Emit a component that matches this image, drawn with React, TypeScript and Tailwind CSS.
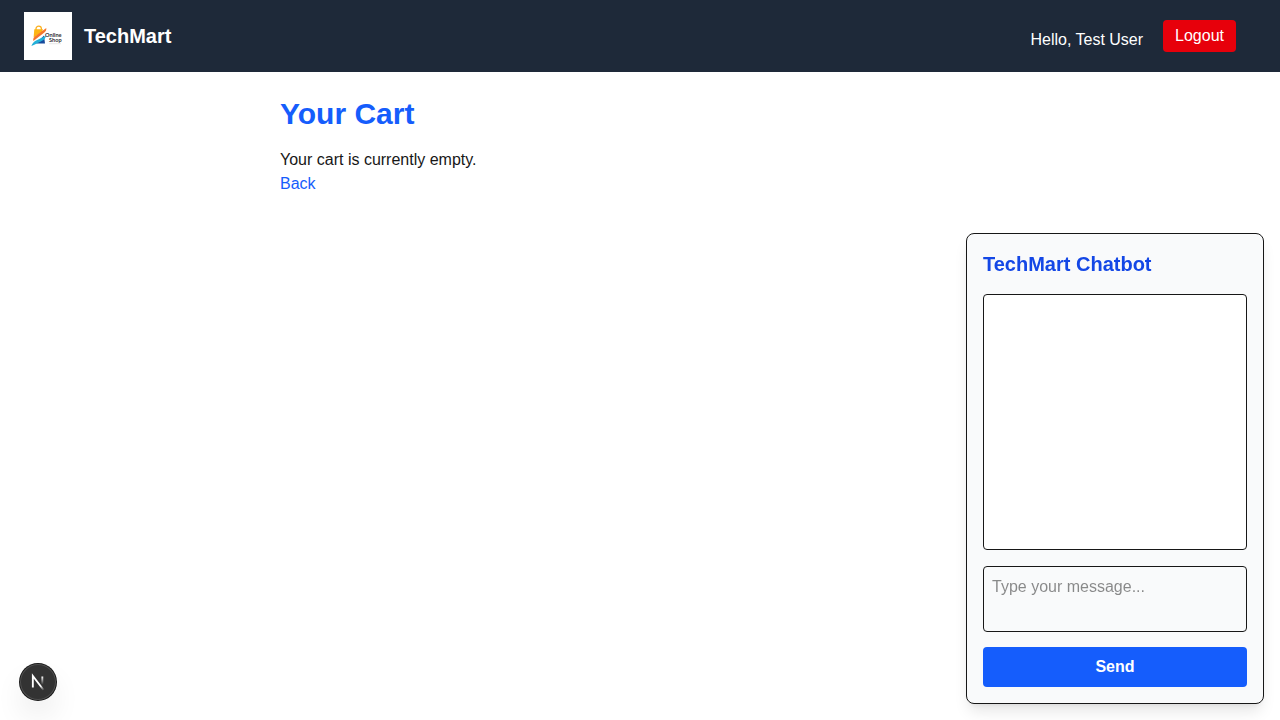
import { useState } from "react";

function ShopLogo() {
  return (
    <svg viewBox="0 0 48 48" className="size-12 shrink-0 bg-white" role="img" aria-label="Online Shop logo">
      <path d="M12 18v-1.200a2.700 2.700 0 0 1 5.400 0V18" fill="none" stroke="#fbb01f" strokeWidth="1.300" />
      <path d="M10.300 17.200H19L18 20l-8.400 5.500z" fill="#fdb515" />
      <path d="M22.300 16c.2 2-.6 3.500-2.200 4.800L9.400 29c-.6-2 .2-3.600 1.800-4.800z" fill="#f5752c" />
      <path d="M20 23.500l1 8H12z" fill="#174a9c" />
      <path d="M21.800 23.800c0 1.800-.8 3-2.400 4.100-4.200 2.700-8 4.100-12 6.100 1-2.400 2-3.900 4.200-5.200 3.600-2 6.800-3.200 10.200-5z" fill="#23b0d8" />
      <text x="21" y="25.200" fontSize="5.600" fontWeight="700" fill="#303036" fontFamily="Lato, sans-serif">
        Online
      </text>
      <text x="25" y="29.800" fontSize="5.600" fontWeight="700" fill="#303036" fontFamily="Lato, sans-serif">
        Shop
      </text>
      <path d="M25.200 31.700H37" stroke="#d6d6d6" strokeWidth=".6" />
    </svg>
  );
}

function Header() {
  return (
    <header className="flex items-center justify-between bg-gray-800 py-3 pr-11 pl-6 text-white">
      <div className="flex items-center gap-3">
        <ShopLogo />
        <span className="text-xl font-bold">TechMart</span>
      </div>
      <div className="flex items-center gap-5">
        <span className="mt-2">Hello, Test User</span>
        <button type="button" className="rounded bg-red-600 px-3 py-1">
          Logout
        </button>
      </div>
    </header>
  );
}

function Chatbot() {
  const [message, setMessage] = useState("");
  return (
    <section
      aria-labelledby="chat-title"
      className="fixed right-4 bottom-4 rounded-lg border border-[#171717] bg-gray-50 p-4 shadow-lg"
    >
      <h2 id="chat-title" className="mb-4 text-xl font-bold text-blue-700">
        TechMart Chatbot
      </h2>
      <div className="mb-4 h-64 w-66 overflow-y-auto rounded border border-[#171717] bg-white p-2" aria-live="polite" />
      <div>
        <textarea
          aria-label="Message"
          rows={2}
          placeholder="Type your message..."
          value={message}
          onChange={(e) => setMessage(e.target.value)}
          className="mb-2 w-full resize-none rounded border border-[#171717] p-2"
        />
      </div>
      <button type="button" className="w-full rounded bg-blue-600 px-4 py-2 font-bold text-white">
        Send
      </button>
    </section>
  );
}

function DevBadge() {
  return (
    <button
      type="button"
      aria-label="Open Next.js Dev Tools"
      className="fixed bottom-5 left-5 flex size-9 items-center justify-center rounded-full bg-[#333333] shadow-[0_0_0_1px_#171717,inset_0_0_0_1px_rgba(255,255,255,0.14),0_16px_32px_-8px_rgba(0,0,0,0.24)]"
    >
      <svg viewBox="0 0 40 40" className="size-10 shrink-0" fill="none" aria-hidden="true">
        <g transform="translate(12.5 13)">
          <path d="M13.3 15.2L2.34 1V12.6" stroke="url(#stem)" strokeWidth="1.86" />
          <path d="M11.825 1.5V13.1" stroke="url(#bar)" strokeWidth="1.86" />
        </g>
        <defs>
          <linearGradient id="stem" x1="9.956" y1="11.123" x2="15.478" y2="17.967" gradientUnits="userSpaceOnUse">
            <stop stopColor="white" />
            <stop offset="0.604" stopColor="white" stopOpacity="0" />
            <stop offset="1" stopColor="white" stopOpacity="0" />
          </linearGradient>
          <linearGradient id="bar" x1="11.822" y1="1.400" x2="11.791" y2="9.625" gradientUnits="userSpaceOnUse">
            <stop stopColor="white" />
            <stop offset="1" stopColor="white" stopOpacity="0" />
          </linearGradient>
        </defs>
      </svg>
    </button>
  );
}

export default function App() {
  return (
    <div className="min-h-screen bg-white font-['Liberation_Sans',Arial,sans-serif] text-[#171717]">
      <Header />
      <main className="mx-auto max-w-3xl p-6">
        <h1 className="mb-4 text-3xl font-bold text-blue-600">Your Cart</h1>
        <p>Your cart is currently empty.</p>
        <a href="#back" className="text-blue-600">
          Back
        </a>
      </main>
      <Chatbot />
      <DevBadge />
    </div>
  );
}
